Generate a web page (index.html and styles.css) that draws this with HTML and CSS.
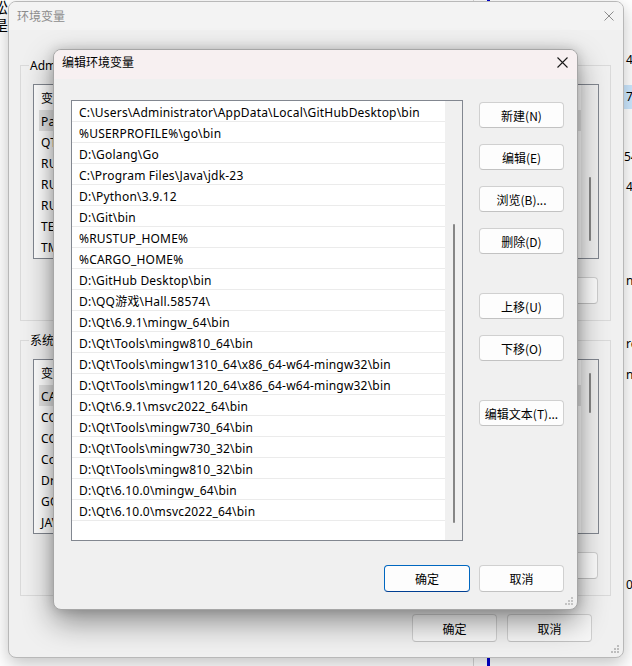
FILE: index.html
```html
<!DOCTYPE html>
<html lang="zh-CN">
<head>
<meta charset="utf-8">
<title>编辑环境变量</title>
<link rel="stylesheet" href="styles.css">
</head>
<body>
<div class="bg-left">松<br>是</div>
<div class="bg-vline"></div>
<div class="bg-gline"></div>
<div class="bg-right">
  <span class="frag f1">4</span>
  <span class="frag f2 hl">7</span>
  <span class="frag f3">54</span>
  <span class="frag f4">4</span>
  <span class="frag f5">n6</span>
  <span class="frag f6">re</span>
  <span class="frag f7">nn</span>
  <span class="frag f8">0</span>
</div>

<section class="win outer">
  <header class="tb tb-outer">
    <span class="tt">环境变量</span>
    <svg class="xicon" width="10" height="10" viewBox="0 0 10 10"><path d="M0.5 0.5L9.5 9.5M9.5 0.5L0.5 9.5" stroke="currentColor" stroke-width="1"/></svg>
  </header>
  <div class="outer-body">
    <div class="grp">
      <span class="grp-label">Administrator 的用户变量(U)</span>
      <div class="lv">
        <div class="lv-main">
          <div class="lv-head"><span class="c1">变量</span><span>值</span></div>
          <div class="lv-row sel">Path</div>
          <div class="lv-row">QT_PLUGIN_PATH</div>
          <div class="lv-row">RUSTUP_DIST_SERVER</div>
          <div class="lv-row">RUSTUP_HOME</div>
          <div class="lv-row">RUSTUP_UPDATE_ROOT</div>
          <div class="lv-row">TEMP</div>
          <div class="lv-row">TMP</div>
        </div>
        <div class="sb"><div class="thumb thumb-u"></div></div>
      </div>
      <div class="grp-btns">
        <button class="btn">新建(N)...</button>
        <button class="btn">编辑(E)...</button>
        <button class="btn">删除(D)</button>
      </div>
    </div>
    <div class="grp grp2">
      <span class="grp-label">系统变量(S)</span>
      <div class="lv">
        <div class="lv-main">
          <div class="lv-head"><span class="c1">变量</span><span>值</span></div>
          <div class="lv-row sel">CARGO_HOME</div>
          <div class="lv-row">COMPUTERNAME</div>
          <div class="lv-row">CONDA_HOME</div>
          <div class="lv-row">ComSpec</div>
          <div class="lv-row">DriverData</div>
          <div class="lv-row">GOPATH</div>
          <div class="lv-row">JAVA_HOME</div>
        </div>
        <div class="sb"><div class="thumb thumb-s"></div></div>
      </div>
      <div class="grp-btns">
        <button class="btn">新建(W)...</button>
        <button class="btn">编辑(I)...</button>
        <button class="btn">删除(L)</button>
      </div>
    </div>
    <div class="outer-foot">
      <button class="btn fbtn">确定</button>
      <button class="btn fbtn">取消</button>
    </div>
  </div>
  <svg class="grip" width="9" height="9" viewBox="0 0 9 9"><g fill="#bdbdbd"><rect x="6" y="0" width="2" height="2"/><rect x="3" y="3" width="2" height="2"/><rect x="6" y="3" width="2" height="2"/><rect x="0" y="6" width="2" height="2"/><rect x="3" y="6" width="2" height="2"/><rect x="6" y="6" width="2" height="2"/></g></svg>
</section>

<section class="win inner">
  <header class="tb tb-inner">
    <span class="tt">编辑环境变量</span>
    <svg class="xicon" width="11" height="11" viewBox="0 0 11 11"><path d="M0.5 0.5L10.5 10.5M10.5 0.5L0.5 10.5" stroke="currentColor" stroke-width="1.1"/></svg>
  </header>
  <div class="inner-body">
    <div class="edit-main">
      <div class="lb">
        <div class="lb-rows">
          <div class="lb-row">C:\Users\Administrator\AppData\Local\GitHubDesktop\bin</div>
          <div class="lb-row">%USERPROFILE%\go\bin</div>
          <div class="lb-row">D:\Golang\Go</div>
          <div class="lb-row">C:\Program Files\Java\jdk-23</div>
          <div class="lb-row">D:\Python\3.9.12</div>
          <div class="lb-row">D:\Git\bin</div>
          <div class="lb-row">%RUSTUP_HOME%</div>
          <div class="lb-row">%CARGO_HOME%</div>
          <div class="lb-row">D:\GitHub Desktop\bin</div>
          <div class="lb-row">D:\QQ游戏\Hall.58574\</div>
          <div class="lb-row">D:\Qt\6.9.1\mingw_64\bin</div>
          <div class="lb-row">D:\Qt\Tools\mingw810_64\bin</div>
          <div class="lb-row">D:\Qt\Tools\mingw1310_64\x86_64-w64-mingw32\bin</div>
          <div class="lb-row">D:\Qt\Tools\mingw1120_64\x86_64-w64-mingw32\bin</div>
          <div class="lb-row">D:\Qt\6.9.1\msvc2022_64\bin</div>
          <div class="lb-row">D:\Qt\Tools\mingw730_64\bin</div>
          <div class="lb-row">D:\Qt\Tools\mingw730_32\bin</div>
          <div class="lb-row">D:\Qt\Tools\mingw810_32\bin</div>
          <div class="lb-row">D:\Qt\6.10.0\mingw_64\bin</div>
          <div class="lb-row">D:\Qt\6.10.0\msvc2022_64\bin</div>
        </div>
        <div class="lb-sb"><div class="lb-thumb"></div></div>
      </div>
      <div class="side">
        <button class="btn sbtn">新建(N)</button>
        <button class="btn sbtn">编辑(E)</button>
        <button class="btn sbtn">浏览(B)...</button>
        <button class="btn sbtn">删除(D)</button>
        <button class="btn sbtn sp">上移(U)</button>
        <button class="btn sbtn">下移(O)</button>
        <button class="btn sbtn sp">编辑文本(T)...</button>
      </div>
    </div>
    <div class="inner-foot">
      <button class="btn ok">确定</button>
      <button class="btn cancel">取消</button>
    </div>
  </div>
  <svg class="grip" width="9" height="9" viewBox="0 0 9 9"><g fill="#c4c4c4"><rect x="6" y="0" width="2" height="2"/><rect x="3" y="3" width="2" height="2"/><rect x="6" y="3" width="2" height="2"/><rect x="0" y="6" width="2" height="2"/><rect x="3" y="6" width="2" height="2"/><rect x="6" y="6" width="2" height="2"/></g></svg>
</section>
</body>
</html>
```

FILE: styles.css
```css
* { box-sizing: border-box; }
html, body { margin: 0; padding: 0; }
body {
  width: 632px;
  height: 666px;
  overflow: hidden;
  position: relative;
  background: #ffffff;
  font-family: "Noto Sans", "Noto Sans CJK SC", sans-serif;
  font-size: 12px;
  line-height: 1;
  color: #000;
}

/* background window fragments */
.bg-left {
  position: absolute;
  left: -7px;
  top: -2px;
  font-family: "Noto Sans CJK SC", sans-serif;
  font-size: 15px;
  line-height: 18px;
  color: #000;
}
.bg-vline { position: absolute; left: 487px; top: 0; width: 3px; height: 666px; background: #0000d0; }
.bg-gline { position: absolute; left: 473px; top: 0; width: 1px; height: 666px; background: #d6d6d6; }
.bg-right {
  position: absolute;
  left: 624px;
  top: 0;
  width: 8px;
  height: 666px;
  display: flex;
  flex-direction: column;
}
.frag { display: block; height: 20px; line-height: 20px; padding-left: 2px; white-space: nowrap; }
.frag.hl { height: 24px; line-height: 24px; background: #cce8ff; }
.f1 { margin-top: 50px; }
.f2 { margin-top: 15px; }
.f3 { margin-top: 38px; padding-left: 0; }
.f4 { margin-top: 10px; }
.f5 { margin-top: 74px; }
.f6 { margin-top: 43px; }
.f7 { margin-top: 11px; }
.f8 { margin-top: 190px; }

/* windows */
.win {
  position: absolute;
  background: #f0f0f0;
  border-radius: 8px;
  overflow: hidden;
  display: flex;
  flex-direction: column;
}
.tb { display: flex; justify-content: space-between; flex-shrink: 0; }
.tt { font-family: "Noto Sans CJK SC", sans-serif; font-size: 12px; line-height: 16px; }
.grip { position: absolute; right: 3px; bottom: 3px; }

/* outer dialog */
.outer {
  left: 8px;
  top: 1px;
  width: 616px;
  height: 657px;
  border: 1px solid #b8b8b8;
  box-shadow: 0 6px 18px rgba(0,0,0,0.24);
}
.tb-outer {
  height: 28px;
  background: #f3f3f3;
  align-items: center;
  padding: 0 9px 0 8px;
  color: #8c8c8c;
}
.tb-outer .tt { color: #8c8c8c; }
.outer-body {
  flex: 1;
  display: flex;
  flex-direction: column;
  padding: 35px 12px 0 11px;
}
.grp {
  position: relative;
  flex-shrink: 0;
  height: 256px;
  border: 1px solid #dadada;
  padding: 18px 11px 0 12px;
}
.grp2 { margin-top: 19px; }
.grp-label {
  position: absolute;
  left: 8px;
  top: -8px;
  padding: 0 1px;
  background: #f0f0f0;
  line-height: 15px;
  font-family: "Noto Sans", "Noto Sans CJK SC", sans-serif;
}
.lv {
  height: 175px;
  border: 1px solid #828790;
  background: #fff;
  display: grid;
  grid-template-columns: 1fr 17px;
}
.lv-main { overflow: hidden; }
.lv-head { height: 25px; display: flex; align-items: center; padding-left: 7px; font-family: "Noto Sans CJK SC", sans-serif; }
.lv-head .c1 { width: 150px; }
.lv-row { height: 21px; line-height: 21px; padding-top: 1px; margin-left: 5px; padding-left: 2px; white-space: nowrap; letter-spacing: 0.2px; }
.lv-row.sel { background: #e3e3e3; }
.sb { background: #f0f0f0; display: flex; justify-content: center; align-items: flex-start; }
.thumb { width: 2px; background: #868686; border-radius: 1px; }
.thumb-u { margin-top: 92px; height: 64px; }
.thumb-s { margin-top: 13px; height: 40px; }
.grp-btns { margin-top: 18px; display: flex; justify-content: flex-end; gap: 10px; padding-right: 1px; }

.btn {
  font-family: "Noto Sans CJK SC", "Noto Sans", sans-serif;
  font-size: 12px;
  color: #000;
  background: #fdfdfd;
  border: 1px solid #d0d0d0;
  border-bottom-color: #c2c2c2;
  border-radius: 4px;
  width: 85px;
  height: 27px;
  padding: 0;
  display: flex;
  align-items: center;
  justify-content: center;
}
.outer-foot { margin-top: 18px; display: flex; justify-content: flex-end; gap: 10px; padding-right: 19px; }
.fbtn { height: 28px; background: #f7f7f7; }

/* inner dialog */
.inner {
  left: 53px;
  top: 49px;
  width: 525px;
  height: 561px;
  border: 1px solid #a6a6a6;
  box-shadow: 0 12px 30px rgba(0,0,0,0.42), 0 0 12px rgba(0,0,0,0.16);
}
.tb-inner {
  height: 29px;
  background: #f7f0f1;
  align-items: flex-start;
  padding: 5px 9px 0 8px;
}
.tb-inner .tt { margin-top: -1px; }
.tb-inner .xicon { margin-top: 2px; color: #1a1a1a; }
.inner-body {
  flex: 1;
  display: flex;
  flex-direction: column;
  padding: 21px 13px 0 17px;
}
.edit-main { display: flex; gap: 16px; }
.lb {
  width: 392px;
  height: 441px;
  border: 1px solid #828790;
  background: #fff;
  display: grid;
  grid-template-columns: 1fr 17px;
}
.lb-rows { overflow: hidden; }
.lb-row {
  height: 21px;
  line-height: 20px;
  padding-top: 2px;
  border-bottom: 1px solid #ebebeb;
  padding-left: 7px;
  white-space: nowrap;
  letter-spacing: 0.2px;
}
.lb-sb { background: #f0f0f0; display: flex; justify-content: center; align-items: flex-start; }
.lb-thumb { width: 2px; height: 299px; margin-top: 123px; background: #868686; border-radius: 1px; }
.side { display: flex; flex-direction: column; gap: 16px; padding-top: 2px; }
.sbtn { height: 26px; }
.sbtn.sp { margin-top: 23px; }
.inner-foot { margin-top: 24px; display: flex; justify-content: flex-end; gap: 9px; }
.ok { width: 86px; border: 1px solid #0067c0; border-bottom-color: #003e92; }
.cancel { width: 85px; }
```
